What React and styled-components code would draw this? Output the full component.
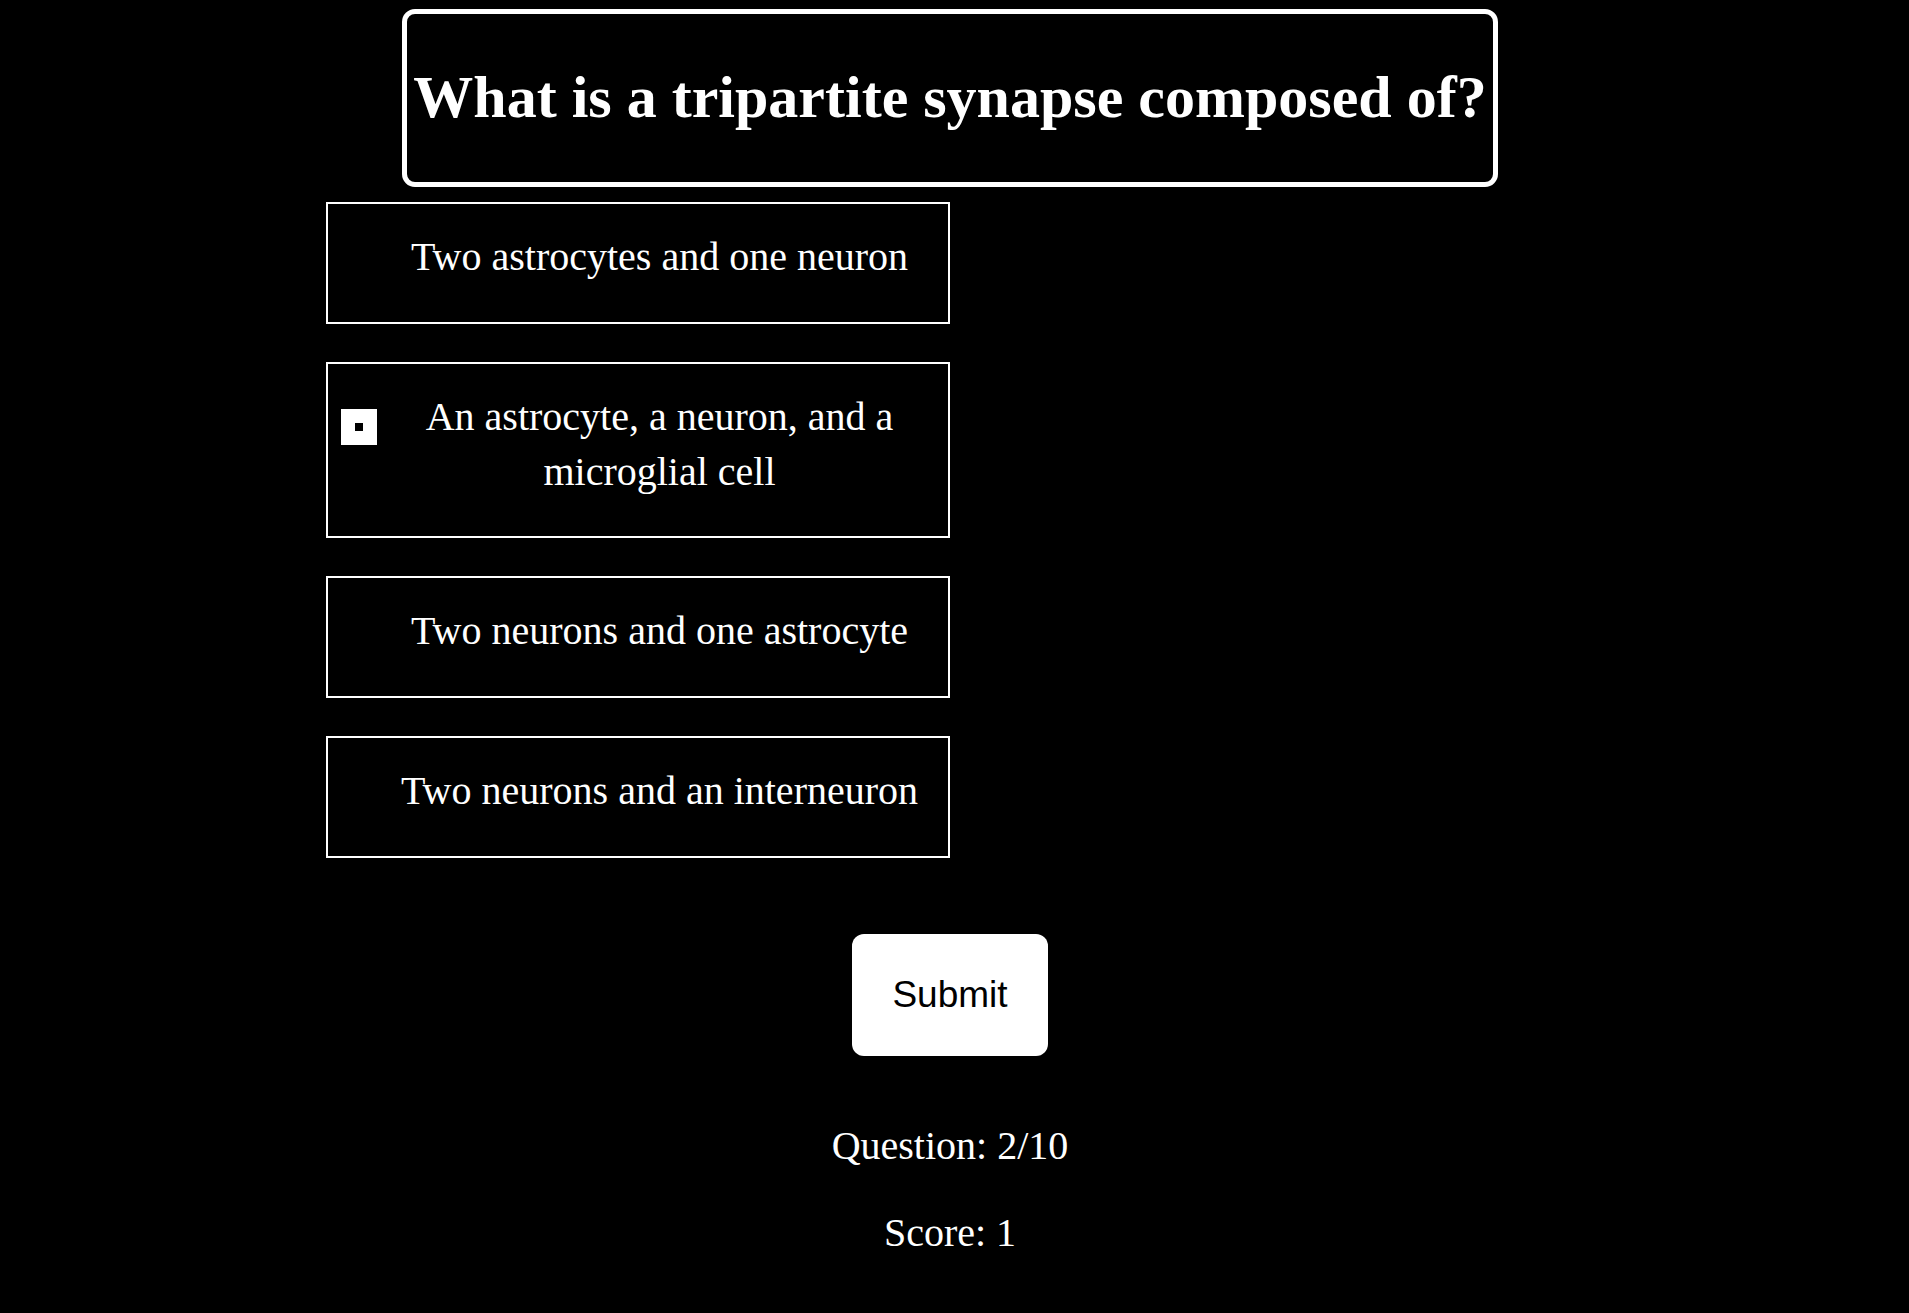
import styled, { createGlobalStyle } from 'styled-components';

const GlobalStyle = createGlobalStyle`
body{
    margin:0;
    background-color:#000;
    color:#fff;
    font-family:"Liberation Serif", "Times New Roman", serif;
}
`

const answers = [
    'Two astrocytes and one neuron',
    'An astrocyte, a neuron, and a microglial cell',
    'Two neurons and one astrocyte',
    'Two neurons and an interneuron',
]

const App = () => {
    return (
        <>
        <GlobalStyle />
        <Page>
            <QuestionBox>
                <h1>What is a tripartite synapse composed of?</h1>
            </QuestionBox>
            <AnswerArea>
                <AnswerList>
                    {answers.map((answer, i) => (
                        <Answer key={answer}>
                            <Radio type="radio" name="answer" defaultChecked={i === 1} />
                            <AnswerText>{answer}</AnswerText>
                        </Answer>
                    ))}
                </AnswerList>
            </AnswerArea>
            <SubmitButton>Submit</SubmitButton>
            <Stat>Question: 2/10</Stat>
            <Stat>Score: 1</Stat>
        </Page>
        </>
    )
}

const Page = styled.main`
display:flex;
flex-direction:column;
align-items:center;
width:1900px;
padding-top:9px;
`

const QuestionBox = styled.div`
border:5px solid #fff;
border-radius:13px;
padding:9px 6px 10px;

h1{
    margin:40px 0;
    font-size:60px;
    font-weight:bold;
    white-space:nowrap;
}
`

const AnswerArea = styled.section`
width:1248px;
margin-top:15px;
`

const AnswerList = styled.div`
width:50%;
display:flex;
flex-direction:column;
row-gap:38px;
`

const Answer = styled.label`
display:flex;
align-items:flex-start;
border:2px solid #fff;
padding:25px 20px 37px 13px;
font-size:40px;
line-height:55px;
cursor:pointer;
`

const Radio = styled.input`
appearance:none;
flex:none;
width:36px;
height:36px;
margin:20px 14px 0 0;
background-color:#000;
display:grid;
place-items:center;

&:checked{
    background-color:#fff;
}
&:checked::after{
    content:"";
    width:8px;
    height:8px;
    background-color:#000;
}
`

const AnswerText = styled.span`
flex:1;
text-align:center;
`

const SubmitButton = styled.button`
margin-top:76px;
margin-bottom:26px;
padding:40px 40px;
border:none;
border-radius:12px;
background-color:#fff;
color:#000;
font-family:"Liberation Sans", Arial, sans-serif;
font-size:37px;
cursor:pointer;
`

const Stat = styled.p`
font-size:40px;
margin:40px 0 0;
`

export default App;
